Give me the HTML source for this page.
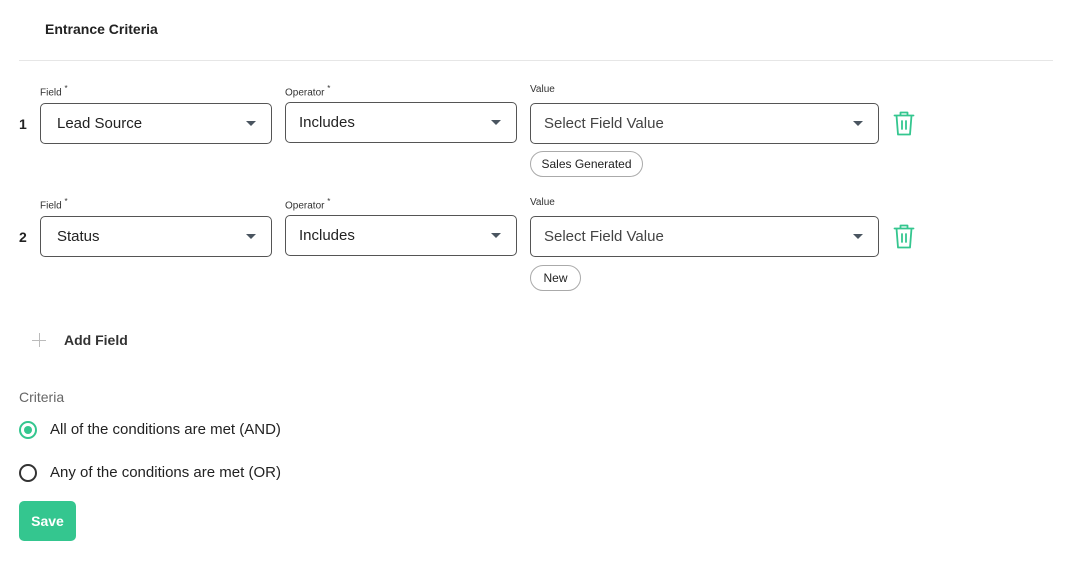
<!DOCTYPE html>
<html><head><style>
*{box-sizing:border-box;margin:0;padding:0}
body{width:1070px;height:562px;background:#fff;font-family:"Liberation Sans",sans-serif;color:#222;position:relative;overflow:hidden}
.a{position:absolute}
.lbl{font-size:10px;color:#333}
.sel{position:absolute;border:1px solid #555;border-radius:5px;height:41px;font-size:15px;color:#222;padding-left:13px;line-height:39px}
.sel:after{content:"";position:absolute;right:15px;top:17px;border-left:5px solid transparent;border-right:5px solid transparent;border-top:5px solid #4a5560}
.chip{position:absolute;border:1px solid #aaa;border-radius:13px;height:26px;font-size:12px;line-height:24px;text-align:center;color:#222}
.num{font-size:14px;font-weight:bold}
.radio{position:absolute;width:18px;height:18px;border-radius:50%;border:2px solid #333}
.t{font-size:15px}
</style></head><body>
<div class="a" style="left:45px;top:21px;font-size:14px;font-weight:bold">Entrance Criteria</div>
<div class="a" style="left:19px;top:60px;width:1034px;height:1px;background:#e6e6e6"></div>

<div class="a lbl" style="left:40px;top:84px">Field <sup style="font-size:8px">*</sup></div>
<div class="a lbl" style="left:285px;top:84px">Operator <sup style="font-size:8px">*</sup></div>
<div class="a lbl" style="left:530px;top:84px">Value</div>
<div class="a num" style="left:19px;top:116px">1</div>
<div class="sel" style="left:40px;top:103px;width:232px;padding-left:16px">Lead Source</div>
<div class="sel" style="left:285px;top:102px;width:232px">Includes</div>
<div class="sel" style="left:530px;top:103px;width:349px;color:#444">Select Field Value</div>
<div class="chip" style="left:530px;top:151px;width:113px">Sales Generated</div>

<div class="a lbl" style="left:40px;top:197px">Field <sup style="font-size:8px">*</sup></div>
<div class="a lbl" style="left:285px;top:197px">Operator <sup style="font-size:8px">*</sup></div>
<div class="a lbl" style="left:530px;top:197px">Value</div>
<div class="a num" style="left:19px;top:229px">2</div>
<div class="sel" style="left:40px;top:216px;width:232px;padding-left:16px">Status</div>
<div class="sel" style="left:285px;top:215px;width:232px">Includes</div>
<div class="sel" style="left:530px;top:216px;width:349px;color:#444">Select Field Value</div>
<div class="chip" style="left:530px;top:265px;width:51px">New</div>

<svg class="a" style="left:893px;top:111px" width="22" height="25" viewBox="0 0 22 25" fill="none" stroke="#34c68f" stroke-width="1.8" stroke-linecap="round" stroke-linejoin="round"><path d="M1.5 4.5h19M7.5 4.5V1.5h7v3M3.5 4.5l1.5 19h12l1.5-19M9 10v8M13 10v8"/></svg>
<svg class="a" style="left:893px;top:224px" width="22" height="25" viewBox="0 0 22 25" fill="none" stroke="#34c68f" stroke-width="1.8" stroke-linecap="round" stroke-linejoin="round"><path d="M1.5 4.5h19M7.5 4.5V1.5h7v3M3.5 4.5l1.5 19h12l1.5-19M9 10v8M13 10v8"/></svg>

<div class="a" style="left:32px;top:340px;width:14px;height:1px;background:#bbb"></div>
<div class="a" style="left:39px;top:333px;width:1px;height:14px;background:#bbb"></div>
<div class="a" style="left:64px;top:332px;font-size:14px;font-weight:bold;color:#333">Add Field</div>

<div class="a" style="left:19px;top:389px;font-size:14px;color:#666">Criteria</div>
<div class="radio" style="left:19px;top:421px;border-color:#34c68f"><div style="position:absolute;left:3px;top:3px;width:8px;height:8px;border-radius:50%;background:#34c68f"></div></div>
<div class="a t" style="left:50px;top:421px">All of the conditions are met (AND)</div>
<div class="radio" style="left:19px;top:464px"></div>
<div class="a t" style="left:50px;top:464px">Any of the conditions are met (OR)</div>
<div class="a" style="left:19px;top:501px;width:57px;height:40px;background:#34c68f;border-radius:5px;color:#fff;font-size:14px;font-weight:bold;text-align:center;line-height:40px">Save</div>
</body></html>
